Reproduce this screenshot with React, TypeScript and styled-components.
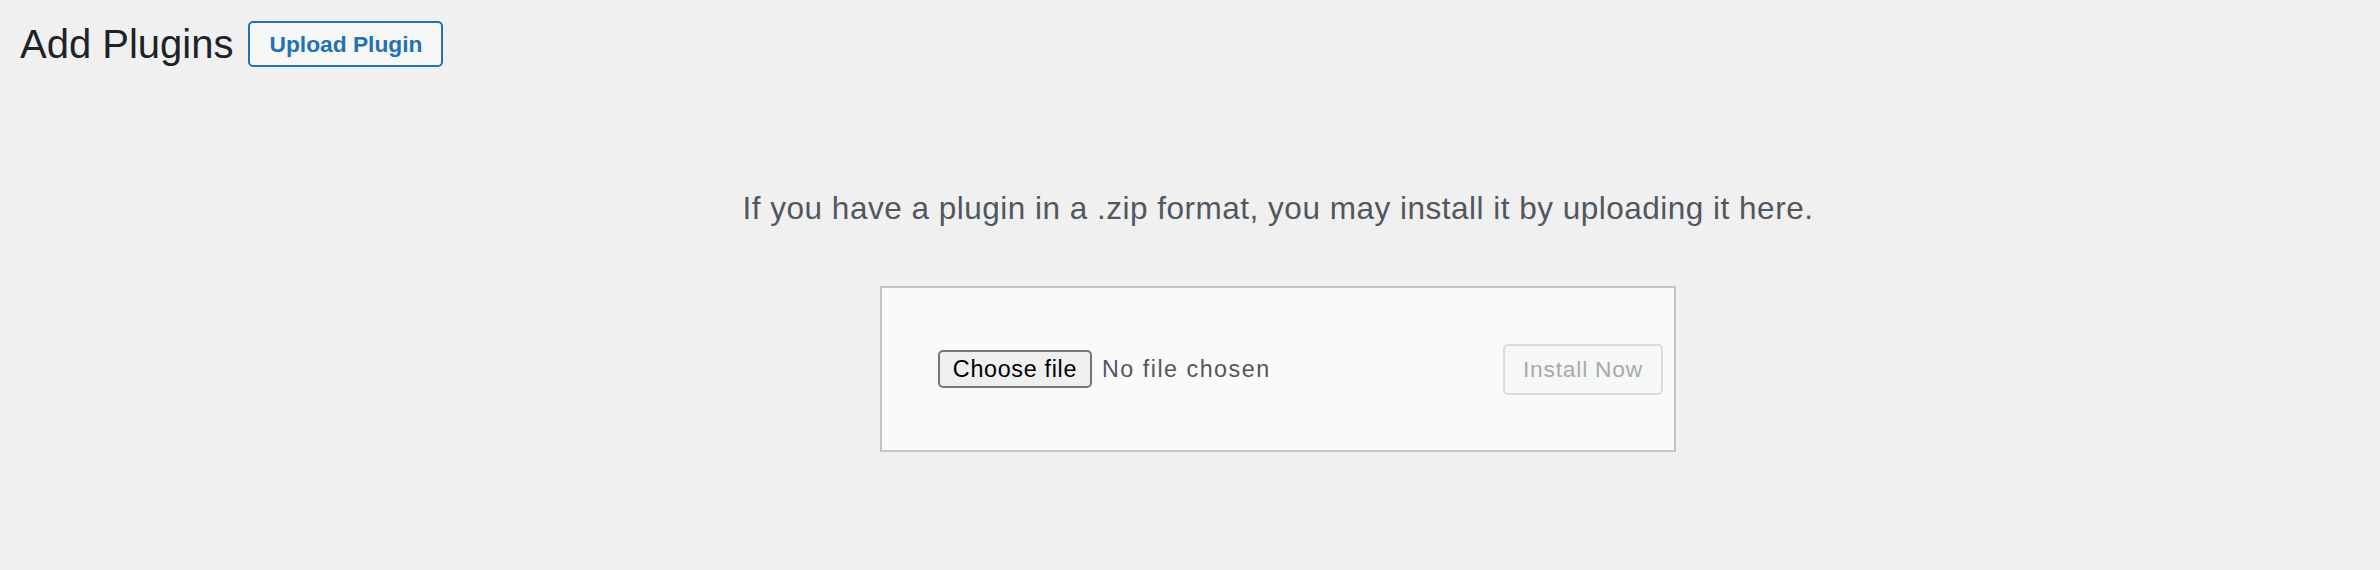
import React from "react";
import styled, { createGlobalStyle } from "styled-components";

const GlobalStyle = createGlobalStyle`
  html, body {
    margin: 0;
    padding: 0;
    background: #f0f0f1;
  }
  body {
    font-family: "Liberation Sans", Arial, sans-serif;
    color: #3c434a;
  }
`;

const Wrap = styled.div`
  padding: 21px 20px 0 20px;
  min-height: 570px;
  box-sizing: border-box;
`;

const Header = styled.div`
  display: flex;
  align-items: center;
  height: 46px;
`;

const Title = styled.h1`
  margin: 0;
  font-family: "Liberation Sans", Arial, sans-serif;
  font-weight: 400;
  font-size: 40px;
  line-height: 46px;
  color: #1d2327;
`;

const TitleAction = styled.button`
  margin-left: 15px;
  height: 46px;
  box-sizing: border-box;
  padding: 0 19px;
  display: inline-flex;
  align-items: center;
  justify-content: center;
  border: 2px solid #2271b1;
  border-radius: 5px;
  background: #f6f7f7;
  color: #2271b1;
  font-family: "Liberation Sans", Arial, sans-serif;
  font-weight: 700;
  font-size: 22.75px;
  cursor: pointer;
`;

const UploadSection = styled.div`
  margin-left: 176px;
  display: flex;
  flex-direction: column;
  align-items: center;
`;

const Help = styled.p`
  margin: 121px 0 0 0;
  font-size: 31.5px;
  line-height: 40px;
  letter-spacing: 0.5px;
  color: #50575e;
  text-align: center;
`;

const UploadForm = styled.form`
  margin-top: 58px;
  width: 796px;
  height: 166px;
  box-sizing: border-box;
  border: 2px solid #c3c4c7;
  background: #fafafa;
  display: flex;
  align-items: center;
  justify-content: space-between;
  padding: 0 11px 0 56px;
`;

const FilePicker = styled.label`
  display: flex;
  align-items: center;
  gap: 10px;
`;

const ChooseButton = styled.span`
  width: 154px;
  height: 38px;
  box-sizing: border-box;
  display: inline-flex;
  align-items: center;
  justify-content: center;
  border: 2px solid #767676;
  border-radius: 5px;
  background: #efefef;
  color: #000;
  font-size: 23.3px;
  letter-spacing: 0.7px;
`;

const FileStatus = styled.span`
  font-size: 23.3px;
  letter-spacing: 1.5px;
  color: #50575e;
`;

const InstallButton = styled.button`
  width: 160px;
  height: 51px;
  box-sizing: border-box;
  border: 2px solid #dcdcde;
  border-radius: 5px;
  background: #f6f7f7;
  color: #a7aaad;
  font-family: "Liberation Sans", Arial, sans-serif;
  font-size: 22.75px;
  letter-spacing: 0.8px;
  padding: 0;
`;

export default function App() {
  return (
    <>
      <GlobalStyle />
      <Wrap>
        <Header>
          <Title>Add Plugins</Title>
          <TitleAction type="button">Upload Plugin</TitleAction>
        </Header>
        <UploadSection>
          <Help>
            If you have a plugin in a .zip format, you may install it by uploading it here.
          </Help>
          <UploadForm onSubmit={(e) => e.preventDefault()}>
            <FilePicker>
              <ChooseButton>Choose file</ChooseButton>
              <FileStatus>No file chosen</FileStatus>
            </FilePicker>
            <InstallButton type="submit" disabled>
              Install Now
            </InstallButton>
          </UploadForm>
        </UploadSection>
      </Wrap>
    </>
  );
}
